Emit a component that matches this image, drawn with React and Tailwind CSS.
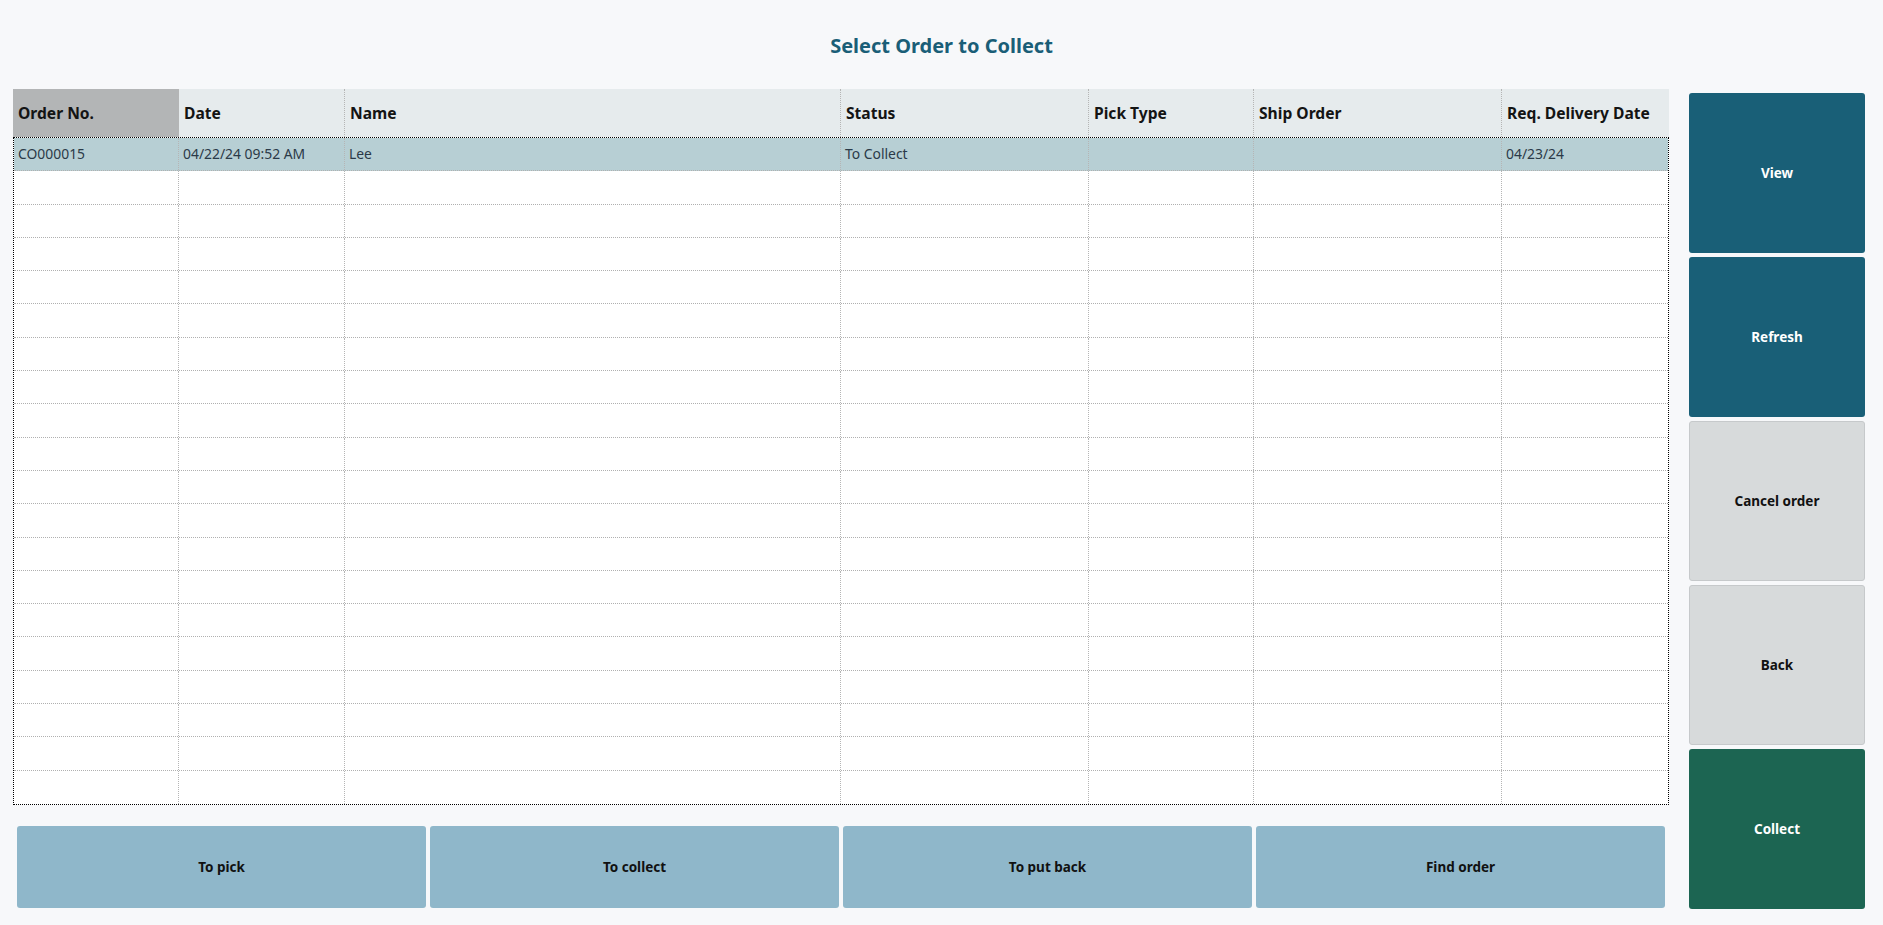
import React from 'react'

// Column layout of the order grid (px)
const COLUMNS = [
    { key: 'orderNo', label: 'Order No.', width: 166 },
    { key: 'date', label: 'Date', width: 166 },
    { key: 'name', label: 'Name', width: 496 },
    { key: 'status', label: 'Status', width: 248 },
    { key: 'pickType', label: 'Pick Type', width: 165 },
    { key: 'shipOrder', label: 'Ship Order', width: 248 },
    { key: 'reqDate', label: 'Req. Delivery Date', width: 167 },
]

const ORDERS = [
    {
        orderNo: 'CO000015',
        date: '04/22/24 09:52 AM',
        name: 'Lee',
        status: 'To Collect',
        pickType: '',
        shipOrder: '',
        reqDate: '04/23/24',
    },
]

const TOTAL_ROWS = 20

const SIDE_BUTTONS = [
    { label: 'View', cls: 'bg-[#195f77] text-white' },
    { label: 'Refresh', cls: 'bg-[#195f77] text-white' },
    { label: 'Cancel order', cls: 'bg-[#d7dadb] text-[#111] border border-[#c6c9cb]' },
    { label: 'Back', cls: 'bg-[#d7dadb] text-[#111] border border-[#c6c9cb]' },
    { label: 'Collect', cls: 'bg-[#1c6552] text-white' },
]

const FILTER_BUTTONS = ['To pick', 'To collect', 'To put back', 'Find order']

function OrderGrid() {
    const rows = Array.from({ length: TOTAL_ROWS }, (_, i) => ORDERS[i] || null)

    return (
        <div className="w-[1656px]">
            {/* Header */}
            <div className="flex h-[48px] bg-[#e6ebed]">
                {COLUMNS.map((col, i) => (
                    <div
                        key={col.key}
                        style={{ width: col.width }}
                        className={`flex items-center pl-[5px] pt-[2px] text-[15.6px] font-bold text-[#141414] ${i === 0 ? 'bg-[#b3b5b6]' : ''} ${i < COLUMNS.length - 1 ? 'border-r border-dotted border-[#b5b5b5]' : ''}`}
                    >
                        {col.label}
                    </div>
                ))}
            </div>

            {/* Body */}
            <div className="border border-dotted border-black bg-white">
                {rows.map((row, r) => (
                    <div
                        key={r}
                        className={`flex h-[33.3px] ${row ? 'bg-[#b7cfd4]' : ''} ${r < TOTAL_ROWS - 1 ? 'border-b border-dotted border-[#b0b0b0]' : ''}`}
                    >
                        {COLUMNS.map((col, i) => {
                            let w = col.width
                            if (i === 0 || i === COLUMNS.length - 1) w -= 1
                            return (
                                <div
                                    key={col.key}
                                    style={{ width: w }}
                                    className={`flex items-center pl-[4px] text-[13.9px] text-[#2b3a48] ${i < COLUMNS.length - 1 ? 'border-r border-dotted border-[#b5b5b5]' : ''}`}
                                >
                                    {row ? row[col.key] : ''}
                                </div>
                            )
                        })}
                    </div>
                ))}
            </div>
        </div>
    )
}

export default function App() {
    return (
        <div
            className="w-full h-[925px] bg-[#f7f8fa] flex flex-col"
            style={{ fontFamily: '"Noto Sans", "Open Sans", sans-serif' }}
        >
            {/* Title */}
            <div className="h-[89px] flex items-center justify-center pt-[2px]">
                <h1 className="text-[20px] font-bold text-[#1a5e77]">Select Order to Collect</h1>
            </div>

            <div className="flex pl-[13px]">
                {/* Grid and filter buttons */}
                <div className="flex flex-col">
                    <OrderGrid />
                    <div className="flex gap-[4px] pl-[4px] mt-[21px]">
                        {FILTER_BUTTONS.map((label) => (
                            <button
                                key={label}
                                className="w-[409px] h-[82px] rounded-[3px] bg-[#8fb7ca] text-[13.5px] font-bold text-[#111]"
                            >
                                {label}
                            </button>
                        ))}
                    </div>
                </div>

                {/* Side actions */}
                <div className="flex flex-col gap-[4px] ml-[20px] mt-[4px]">
                    {SIDE_BUTTONS.map((b) => (
                        <button
                            key={b.label}
                            className={`w-[176px] h-[160px] rounded-[3px] text-[13.5px] font-bold ${b.cls}`}
                        >
                            {b.label}
                        </button>
                    ))}
                </div>
            </div>
        </div>
    )
}
